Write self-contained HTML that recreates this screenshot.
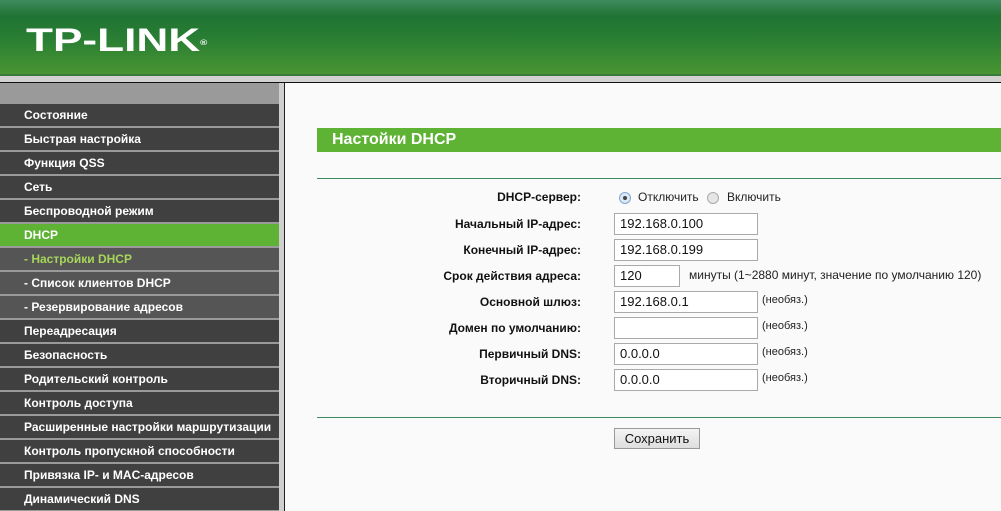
<!DOCTYPE html>
<html><head><meta charset="utf-8"><style>
*{margin:0;padding:0;box-sizing:border-box}
body{width:1001px;height:511px;overflow:hidden;background:#fafafa;font-family:"Liberation Sans",Arial,sans-serif;position:relative}
#hdr{position:absolute;left:0;top:0;width:1001px;height:76px;background:linear-gradient(#3f8b5e 0px,#1f7333 16px,#2a7f33 40px,#4a9632 76px)}
#hdr2{position:absolute;left:0;top:74px;width:1001px;height:2px;background:#3a7a3a}
#band{position:absolute;left:0;top:76px;width:1001px;height:6px;background:#d2d2d2}
#bl{position:absolute;left:0;top:82px;width:1001px;height:1px;background:#111}
#logo{position:absolute;left:26px;top:23px;color:#fff;font-weight:bold;font-size:32px;line-height:34px;letter-spacing:0px;font-family:"Liberation Sans",Arial,sans-serif;transform:scaleX(1.38);transform-origin:left}
#logo sup{font-size:7px;vertical-align:top;position:relative;top:4px}
#side{position:absolute;left:0;top:83px;width:279px;height:428px;background:#9a9a9a}
#sb{position:absolute;left:279px;top:83px;width:5px;height:428px;background:#cfcfcf}
#sl{position:absolute;left:284px;top:83px;width:1px;height:428px;background:#222}
.m{position:absolute;left:0;width:279px;height:22px;background:#404040;color:#fff;font-weight:bold;font-size:12px;line-height:22px;padding-left:24px}
.m.g{background:#5eb234}
.m.s{background:#555;color:#a7d65a}
#title{position:absolute;left:317px;top:128px;width:684px;height:24px;background:#5eb234;color:#fff;font-weight:bold;font-size:16px;line-height:23px;padding-left:15px}
.ln{position:absolute;left:317px;width:684px;height:1px;background:#3d8a5e}
.lb{position:absolute;right:420px;font-size:12px;font-weight:bold;color:#111;line-height:14px}
.in{position:absolute;left:614px;width:144px;height:22px;border:1px solid #aaa;background:#fff;font-size:13px;line-height:20px;padding-left:5px;color:#111}
.nt{position:absolute;font-size:11px;color:#222;line-height:14px}
#btn{position:absolute;left:614px;top:428px;width:86px;height:21px;border:1px solid #999;background:linear-gradient(#f4f4f4,#dedede);font-size:13px;line-height:19px;text-align:center;color:#111}
.rd{position:absolute;width:12px;height:12px;border-radius:50%;border:1px solid #aaa;background:#e6e6e6}
</style></head><body>
<div id="hdr"></div><div id="hdr2"></div><div id="band"></div><div id="bl"></div>
<div id="logo">TP-LINK<sup>®</sup></div>
<div id="side"></div><div id="sb"></div><div id="sl"></div>
<div class="m" style="top:104px">Состояние</div>
<div class="m" style="top:128px">Быстрая настройка</div>
<div class="m" style="top:152px">Функция QSS</div>
<div class="m" style="top:176px">Сеть</div>
<div class="m" style="top:200px">Беспроводной режим</div>
<div class="m g" style="top:224px">DHCP</div>
<div class="m s" style="top:248px">- Настройки DHCP</div>
<div class="m" style="top:272px;background:#555">- Список клиентов DHCP</div>
<div class="m" style="top:296px;background:#555">- Резервирование адресов</div>
<div class="m" style="top:320px">Переадресация</div>
<div class="m" style="top:344px">Безопасность</div>
<div class="m" style="top:368px">Родительский контроль</div>
<div class="m" style="top:392px">Контроль доступа</div>
<div class="m" style="top:416px">Расширенные настройки маршрутизации</div>
<div class="m" style="top:440px">Контроль пропускной способности</div>
<div class="m" style="top:464px">Привязка IP- и MAC-адресов</div>
<div class="m" style="top:488px">Динамический DNS</div>
<div id="title">Настойки DHCP</div>
<div class="ln" style="top:178px"></div>
<div class="ln" style="top:417px"></div>
<div class="lb" style="top:190px">DHCP-сервер:</div>
<div class="rd" style="left:619px;top:192px;border-color:#7fa7d8;background:#dde8f5"><div style="position:absolute;left:3px;top:3px;width:4px;height:4px;border-radius:50%;background:#444"></div></div>
<div class="nt" style="left:638px;top:190px;font-size:12px">Отключить</div>
<div class="rd" style="left:707px;top:192px"></div>
<div class="nt" style="left:727px;top:190px;font-size:12px">Включить</div>
<div class="lb" style="top:217px">Начальный IP-адрес:</div><div class="in" style="top:213px">192.168.0.100</div>
<div class="lb" style="top:243px">Конечный IP-адрес:</div><div class="in" style="top:239px">192.168.0.199</div>
<div class="lb" style="top:269px">Срок действия адреса:</div><div class="in" style="top:265px;width:66px">120</div>
<div class="nt" style="left:689px;top:268px;font-size:12px">минуты (1~2880 минут, значение по умолчанию 120)</div>
<div class="lb" style="top:295px">Основной шлюз:</div><div class="in" style="top:291px">192.168.0.1</div><div class="nt" style="left:762px;top:293px">(необяз.)</div>
<div class="lb" style="top:321px">Домен по умолчанию:</div><div class="in" style="top:317px"></div><div class="nt" style="left:762px;top:319px">(необяз.)</div>
<div class="lb" style="top:347px">Первичный DNS:</div><div class="in" style="top:343px">0.0.0.0</div><div class="nt" style="left:762px;top:345px">(необяз.)</div>
<div class="lb" style="top:373px">Вторичный DNS:</div><div class="in" style="top:369px">0.0.0.0</div><div class="nt" style="left:762px;top:371px">(необяз.)</div>
<div id="btn">Сохранить</div>
</body></html>
